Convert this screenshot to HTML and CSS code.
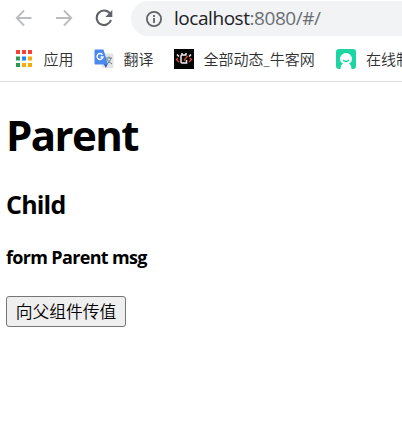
FILE: index.html
```html
<!DOCTYPE html>
<html lang="zh-CN">
<head>
<meta charset="utf-8">
<title>localhost:8080</title>
<link rel="stylesheet" href="styles.css">
</head>
<body>
<header class="browser">
  <div class="toolbar">
    <svg class="nav" viewBox="0 0 18 18"><path d="M16.500 9H2M9 1.500L1.700 9L9 16.500"/></svg>
    <svg class="nav" viewBox="0 0 18 18"><path d="M1 9H16M9 1.500L16.300 9L9 16.500"/></svg>
    <svg class="nav reload" viewBox="0 0 18 18"><path d="M14.800 4.300A7.300 7.300 0 1 0 16 11"/><path class="tip" d="M17.300 1V8H10.300Z"/></svg>
    <div class="address">
      <svg class="info" viewBox="0 0 18 18"><circle cx="9" cy="9" r="7.100"/><path d="M9 8V13M9 5V6.900"/></svg>
      <span class="url">localhost<span class="path">:8080/#/</span></span>
    </div>
  </div>
  <nav class="bookmarks">
    <a class="bookmark apps">
      <svg class="icon" viewBox="0 0 20 20"><path fill="#f44336" d="M2 1h4v4H2zM8 1h4v4H8zM14 1h4v4h-4z"/><path fill="#299b55" d="M2 7.500h4v4H2zM2 14h4v4H2z"/><path fill="#1e88f5" d="M8 7.500h4v4H8z"/><path fill="#fbab09" d="M14 7.500h4v4h-4zM14 14h4v4h-4zM8 14h4v4H8z"/></svg>
      <span>应用</span>
    </a>
    <a class="bookmark translate">
      <svg class="icon" viewBox="0 0 20 20"><rect x="8" y="4.500" width="11.500" height="14.500" rx="1" fill="#e4e4e4"/><path d="M12 9h6M15 7.500V9M17 9q-1 4-4 6M13 10q1 3 5 5" fill="none" stroke="#64818b"/><path fill="#3659bb" d="M9 14h5l-2 5z"/><path fill="#4a87ee" d="M1.500.500h8L14 15.500H1.500q-1 0-1-1v-13q0-1 1-1z"/><path d="M8.500 5.800A3 3 0 1 0 9 8H6.500" fill="none" stroke="#fff" stroke-width="1.400"/></svg>
      <span>翻译</span>
    </a>
    <a class="bookmark feed">
      <svg class="icon" viewBox="0 0 20 20"><path fill="#050505" d="M0 0h20v20H0z"/><path d="M12.500 6H8q-1 0-1 1v6q0 1 1 1h4.500v-3M8 4v2M12 4v2M3 5.500l2 2M17 5.500l-2 2" fill="none" stroke="#f4eeee" stroke-width="1.500"/><path d="M4 9l-1.500 1.500L5 13M16 9l1.500 1.500L15 13M13.500 7L10 11.500" fill="none" stroke="#d44c35" stroke-width="1.400"/></svg>
      <span>全部动态_牛客网</span>
    </a>
    <a class="bookmark tool">
      <svg class="icon" viewBox="0 0 20 20"><rect width="20" height="20" rx="3" fill="#1bd6a2"/><path fill="#fff" d="M4.500 20q0-4 2.500-5.500Q4 13 4 10a6 6 0 0 1 12 0q0 3-3 4.500 2.500 1.500 2.500 5.500z"/><path d="M7 11q3 3 6 0" fill="none" stroke="#1bd6a2" stroke-width="1.200"/></svg>
      <span>在线制</span>
    </a>
  </nav>
</header>
<main class="page">
  <h1>Parent</h1>
  <h2>Child</h2>
  <h4>form Parent msg</h4>
  <button type="button">向父组件传值</button>
</main>
</body>
</html>
```
FILE: styles.css
```css
* { box-sizing: border-box; }
body {
  margin: 0;
  height: 426px;
  overflow: hidden;
  background: #fff;
  color: #000;
  font-family: "Open Sans", "Noto Sans CJK SC", sans-serif;
}
.browser { height: 82px; overflow: hidden; border-bottom: 1px solid #dadce0; }
.toolbar {
  display: flex;
  align-items: center;
  height: 37px;
  padding-left: 15px;
}
.nav {
  flex: none;
  width: 18px;
  height: 18px;
  margin-right: 22px;
  margin-top: -1px;
  fill: none;
  stroke: #babcbe;
  stroke-width: 1.8;
}
.reload { stroke: #5f6368; stroke-width: 2.1; margin-right: 18px; }
.tip { fill: #5f6368; stroke: none; }
.address {
  display: flex;
  align-items: center;
  flex: 1;
  height: 35px;
  padding-left: 14px;
  border-radius: 18px 0 0 18px;
  background: #f1f3f4;
}
.info {
  width: 18px;
  height: 18px;
  margin-right: 11px;
  fill: none;
  stroke: #5f6368;
  stroke-width: 1.8;
}
.url { margin-top: -1px; font-size: 19px; line-height: 34px; letter-spacing: -0.45px; color: #202124; white-space: nowrap; }
.path { color: #6b6f73; }
.bookmarks { display: flex; height: 44px; padding-left: 14px; }
.bookmark {
  display: flex;
  flex: none;
  align-items: center;
  font-size: 15px;
  font-weight: 350;
  color: #303134;
  white-space: nowrap;
}
.bookmark span { margin-top: -2px; }
.icon { width: 20px; height: 20px; margin-right: 10px; }
.apps, .translate { width: 80px; }
.apps span, .translate span, .feed span { margin-left: -0.5px; }
.feed { width: 162px; }
.page { padding: 0 6px; }
h1, h2, h4 { margin: 0; font-weight: 700; white-space: nowrap; }
h1 { height: 92px; padding-top: 23px; font-size: 42px; line-height: 60px; letter-spacing: -1.6px; }
h2 { height: 60px; padding-top: 10px; font-size: 25px; line-height: 40px; letter-spacing: -0.8px; }
h4 { height: 62px; padding-top: 8px; font-size: 18px; line-height: 30px; letter-spacing: -0.66px; }
button {
  display: block;
  width: 120px;
  height: 31px;
  padding: 0;
  border: 1px solid #767676;
  border-radius: 3px;
  background: #efefef;
  color: #000;
  font: 350 16.8px/27px "Noto Sans CJK SC", sans-serif;
}
```
